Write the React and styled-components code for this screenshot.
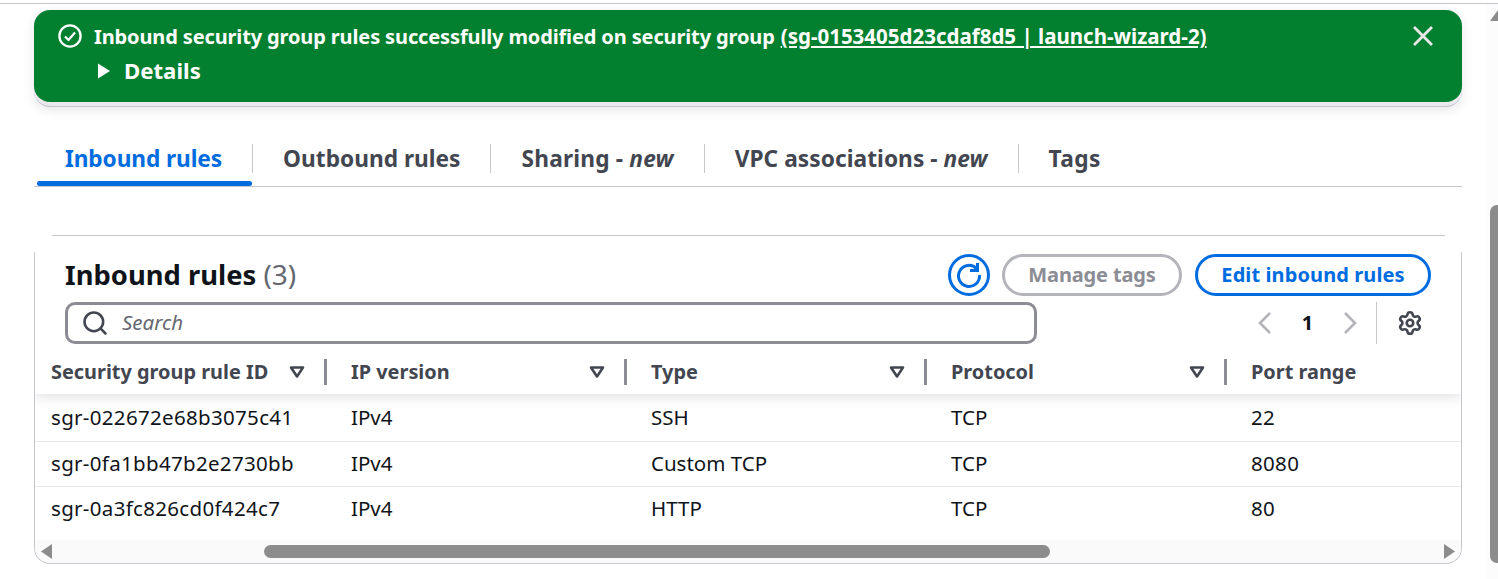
import React from "react";
import styled, { createGlobalStyle } from "styled-components";
import { Search, Settings } from "lucide-react";

const GlobalStyle = createGlobalStyle`
	html, body {
		margin: 0;
		padding: 0;
		height: 579px;
		overflow: hidden;
		background: #fff;
		font-family: "Noto Sans", "Open Sans", sans-serif;
	}
	* { box-sizing: border-box; }
`;

const Page = styled.div`
	width: 1498px;
	height: 579px;
	padding-top: 3px;
	overflow: hidden;
`;

const TopRule = styled.div`
	height: 1px;
	background: #c6c6cd;
`;

const Body = styled.div`
	display: flex;
`;

const Main = styled.div`
	width: 1486px;
`;

const Content = styled.div`
	width: 1428px;
	margin-left: 34px;
`;

const FlashOuter = styled.div`
	height: 97px;
	margin-top: 6px;
	border-radius: 16px;
	background: #e9e9ef;
	border-bottom: 1px solid #c6c6cd;
	box-shadow: 0 3px 12px rgba(0, 7, 22, 0.1);
`;

const Flash = styled.div`
	display: flex;
	justify-content: space-between;
	height: 92px;
	padding: 8px 29px 0 24px;
	border-radius: 16px;
	background: #037f30;
	color: #fff;
`;

const FlashBody = styled.div`
	display: flex;
	flex-direction: column;
`;

const FlashLine = styled.div`
	display: flex;
	align-items: center;
	height: 36px;
	font-size: 20px;
	font-weight: 700;
	white-space: nowrap;
`;

const FlashMessage = styled.span`
	margin-left: 12px;
	letter-spacing: -0.13px;
`;

const FlashLink = styled.span`
	margin-left: 6px;
	font-size: 20.5px;
	text-decoration: underline;
`;

const DetailsLine = styled.div`
	display: flex;
	align-items: center;
	height: 34px;
	margin-left: 40px;
	gap: 14px;
	font-size: 22.2px;
	font-weight: 700;
`;

const DetailsLabel = styled.span`
	margin-bottom: 2px;
`;

const Close = styled.div`
	display: flex;
	margin-top: 8px;
	color: #e8e8ea;
`;

const Tabs = styled.div`
	display: flex;
	align-items: flex-start;
	height: 80px;
	padding-top: 37px;
	border-bottom: 1px solid #c6c6cd;
`;

const Tab = styled.div`
	position: relative;
	display: flex;
	align-items: center;
	height: 29px;
	padding: 0 30px;
	font-size: 22.7px;
	letter-spacing: ${({ $spacing }) => $spacing || 0}px;
	font-weight: 700;
	white-space: nowrap;
	color: ${({ $active }) => ($active ? "#006ce0" : "#424650")};
	border-right: ${({ $last }) => ($last ? "none" : "1px solid #c6c6cd")};
	margin-left: ${({ $active }) => ($active ? "1px" : "0")};

	em {
		margin-left: 6px;
		font-weight: 700;
		font-style: italic;
	}

	&::after {
		content: "";
		display: ${({ $active }) => ($active ? "block" : "none")};
		position: absolute;
		left: 2px;
		right: 0;
		bottom: -13px;
		height: 5px;
		border-radius: 3px;
		background: #006ce0;
	}
`;

const CardRule = styled.div`
	height: 1px;
	margin: 48px 17px 0 18px;
	background: #c6c6cd;
`;

const Card = styled.div`
	height: 312px;
	margin-top: 16px;
	display: flex;
	flex-direction: column;
	border: 1px solid #c6c6cd;
	border-top: none;
	border-radius: 0 0 16px 16px;
	overflow: hidden;
`;

const CardHeader = styled.div`
	height: 98px;
	padding: 2px 30px 0 30px;
	display: flex;
	flex-direction: column;
	gap: 6px;
`;

const TitleRow = styled.div`
	display: flex;
	align-items: center;
	justify-content: space-between;
	height: 42px;
`;

const Title = styled.h2`
	margin: 0 0 2px 0;
	font-size: 27.4px;
	font-weight: 700;
	color: #0f141a;

	span {
		font-size: 28px;
		font-weight: 400;
		color: #656871;
	}
`;

const Actions = styled.div`
	display: flex;
	align-items: center;
	gap: 12px;
`;

const IconButton = styled.div`
	display: flex;
	align-items: center;
	justify-content: center;
	width: 42px;
	height: 42px;
	border: 3px solid #006ce0;
	border-radius: 50%;
	color: #006ce0;
`;

const Button = styled.div`
	display: flex;
	align-items: center;
	justify-content: center;
	height: 42px;
	width: ${({ $width }) => $width}px;
	padding-bottom: 2px;
	border: 3px solid ${({ $disabled }) => ($disabled ? "#b4b4bb" : "#006ce0")};
	border-radius: 21px;
	font-size: 20px;
	font-weight: 700;
	letter-spacing: ${({ $disabled }) => ($disabled ? "-0.15px" : "0.1px")};
	color: ${({ $disabled }) => ($disabled ? "#8c8c94" : "#006ce0")};
`;

const EditButton = styled(Button)`
	margin-left: 1px;
`;

const ToolRow = styled.div`
	display: flex;
	align-items: center;
	justify-content: space-between;
`;

const SearchBox = styled.div`
	display: flex;
	align-items: center;
	width: 972px;
	height: 42px;
	padding-left: 13px;
	gap: 13px;
	border: 3px solid #8c8c94;
	border-radius: 10px;
	color: #424650;

	span {
		margin-bottom: 2px;
		font-size: 20.5px;
		font-style: italic;
		color: #656871;
	}
`;

const Pager = styled.div`
	display: flex;
	align-items: center;
	height: 42px;
	color: #b4b4bb;
`;

const PageNum = styled.span`
	width: 71px;
	margin-bottom: 2px;
	text-align: center;
	font-size: 20px;
	font-weight: 700;
	color: #0f141a;
`;

const PagerRule = styled.div`
	width: 1px;
	height: 42px;
	margin: 0 20px 0 19px;
	background: #c6c6cd;
`;

const GearWrap = styled.div`
	display: flex;
	margin-right: 8px;
	color: #424650;
`;

const Table = styled.div`
	flex: 1;
	overflow: hidden;
`;

const Row = styled.div`
	display: grid;
	grid-template-columns: repeat(4, 300px) 1fr;
	align-items: center;
	height: ${({ $height }) => $height}px;
	border-bottom: ${({ $last }) => ($last ? "none" : "1px solid #e8e8ea")};
	font-size: 20.5px;
	color: #0f141a;
`;

const HeadRow = styled.div`
	display: grid;
	grid-template-columns: repeat(4, 300px) 1fr;
	align-items: center;
	height: 44px;
	box-shadow: 0 3px 12px rgba(0, 7, 22, 0.12);
	position: relative;
`;

const HeadCell = styled.div`
	display: flex;
	align-items: center;
	justify-content: space-between;
	height: 26px;
	padding: 0 8px 0 16px;
	font-size: 19.9px;
	font-weight: 700;
	white-space: nowrap;
	color: #424650;
`;

const HeadLabel = styled.span`
	margin-bottom: 2px;
`;

const SortIcon = styled.div`
	display: flex;
	align-items: center;
	gap: 19px;
	height: 100%;
	color: #424650;
`;

const Resizer = styled.div`
	width: 3px;
	height: 26px;
	background: #8c8c94;
`;

const Cell = styled.div`
	padding: 0 0 2px 16px;
	letter-spacing: ${({ $digits }) => ($digits ? "0.32px" : "0")};
`;

const HScroll = styled.div`
	display: flex;
	align-items: center;
	height: 23px;
	background: #fafafa;
	padding: 0 6px;
`;

const HThumb = styled.div`
	width: 786px;
	height: 13px;
	margin-left: 212px;
	margin-right: auto;
	border-radius: 7px;
	background: #8c8c8c;
`;

const ScrollArrow = styled.svg`
	display: block;
	flex: none;
`;

const PageScroll = styled.div`
	width: 12px;
	height: 575px;
	padding: 6px 0 0 4px;
	background: #fcfcfc;
	overflow: hidden;
`;

const VThumb = styled.div`
	width: 8px;
	height: 358px;
	margin: 184px 0 0 0;
	border-radius: 7px 0 0 7px;
	background: #8c8c8c;
`;

const columns = ["Security group rule ID", "IP version", "Type", "Protocol", "Port range"];
const rules = [
	["sgr-022672e68b3075c41", "IPv4", "SSH", "TCP", "22"],
	["sgr-0fa1bb47b2e2730bb", "IPv4", "Custom TCP", "TCP", "8080"],
	["sgr-0a3fc826cd0f424c7", "IPv4", "HTTP", "TCP", "80"],
];
const rowHeights = [48, 45, 44];

const CheckCircle = () => (
	<svg width="24" height="24" viewBox="0 0 24 24" fill="none" stroke="currentColor" strokeWidth="2.3">
		<circle cx="12" cy="12" r="10.6" />
		<path d="M7 12.5l3.5 3.5L17 8.5" strokeLinejoin="round" />
	</svg>
);

const Caret = () => (
	<svg width="12" height="16" viewBox="0 0 12 16" fill="currentColor">
		<path d="M0 0.5L12 8 0 15.5z" />
	</svg>
);

const CloseIcon = () => (
	<svg width="20" height="20" viewBox="0 0 20 20" fill="none" stroke="currentColor" strokeWidth="2.8">
		<path d="M1 1l18 18M19 1L1 19" />
	</svg>
);

const Refresh = () => (
	<svg width="28" height="28" viewBox="0 0 28 28" fill="none" stroke="currentColor" strokeWidth="3">
		<path d="M21.5 7.5A10.5 10.5 0 1 0 24.5 14" />
		<path d="M15 9.5h7.5V2" />
	</svg>
);

const SortDown = () => (
	<svg width="16" height="14" viewBox="0 0 16 14" fill="none" stroke="currentColor" strokeWidth="2.6" strokeLinejoin="round">
		<path d="M2 2.5h12L8 11.5z" />
	</svg>
);

const Chevron = ({ flip }) => (
	<svg width="14" height="22" viewBox="0 0 14 22" fill="none" stroke="currentColor" strokeWidth="2.6">
		<path d={flip ? "M2 1l10 10L2 21" : "M12 1L2 11l10 10"} />
	</svg>
);

const App = () => {
	return (
		<Page>
			<GlobalStyle />
			<TopRule />
			<Body>
				<Main>
					<Content>
						<FlashOuter>
							<Flash>
								<FlashBody>
									<FlashLine>
										<CheckCircle />
										<FlashMessage>Inbound security group rules successfully modified on security group</FlashMessage>
										<FlashLink>(sg-0153405d23cdaf8d5 | launch-wizard-2)</FlashLink>
									</FlashLine>
									<DetailsLine>
										<Caret />
										<DetailsLabel>Details</DetailsLabel>
									</DetailsLine>
								</FlashBody>
								<Close>
									<CloseIcon />
								</Close>
							</Flash>
						</FlashOuter>
						<Tabs>
							<Tab $active $spacing={-0.1}>Inbound rules</Tab>
							<Tab>Outbound rules</Tab>
							<Tab $spacing={0.2}>Sharing -<em>new</em></Tab>
							<Tab $spacing={0.05}>VPC associations -<em>new</em></Tab>
							<Tab $last $spacing={0.4}>Tags</Tab>
						</Tabs>
						<CardRule />
						<Card>
							<CardHeader>
								<TitleRow>
									<Title>Inbound rules <span>(3)</span></Title>
									<Actions>
										<IconButton><Refresh /></IconButton>
										<Button $disabled $width={180}>Manage tags</Button>
										<EditButton $width={236}>Edit inbound rules</EditButton>
									</Actions>
								</TitleRow>
								<ToolRow>
									<SearchBox>
										<Search size={28} strokeWidth={2.2} />
										<span>Search</span>
									</SearchBox>
									<Pager>
										<Chevron />
										<PageNum>1</PageNum>
										<Chevron flip />
										<PagerRule />
										<GearWrap><Settings size={26} strokeWidth={2.4} /></GearWrap>
									</Pager>
								</ToolRow>
							</CardHeader>
							<Table>
								<HeadRow>
									{columns.map((c, i) => (
										<HeadCell key={c}>
											<HeadLabel>{c}</HeadLabel>
											{i < 4 && (
												<SortIcon>
													<SortDown />
													<Resizer />
												</SortIcon>
											)}
										</HeadCell>
									))}
								</HeadRow>
								{rules.map((r, i) => (
									<Row key={r[0]} $height={rowHeights[i]} $last={i === 2}>
										{r.map((v, j) => <Cell key={j} $digits={j === 0 || j === 4}>{v}</Cell>)}
									</Row>
								))}
							</Table>
							<HScroll>
								<ScrollArrow width="11" height="15" viewBox="0 0 11 15" fill="#8c8c8c"><path d="M11 0v15L0 7.5z" /></ScrollArrow>
								<HThumb />
								<ScrollArrow width="11" height="15" viewBox="0 0 11 15" fill="#8c8c8c"><path d="M0 0v15l11-7.5z" /></ScrollArrow>
							</HScroll>
						</Card>
					</Content>
				</Main>
				<PageScroll>
					<ScrollArrow width="16" height="11" viewBox="0 0 16 11" fill="#8c8c8c"><path d="M0 11h16L8 0z" /></ScrollArrow>
					<VThumb />
				</PageScroll>
			</Body>
		</Page>
	);
};

export default App;
